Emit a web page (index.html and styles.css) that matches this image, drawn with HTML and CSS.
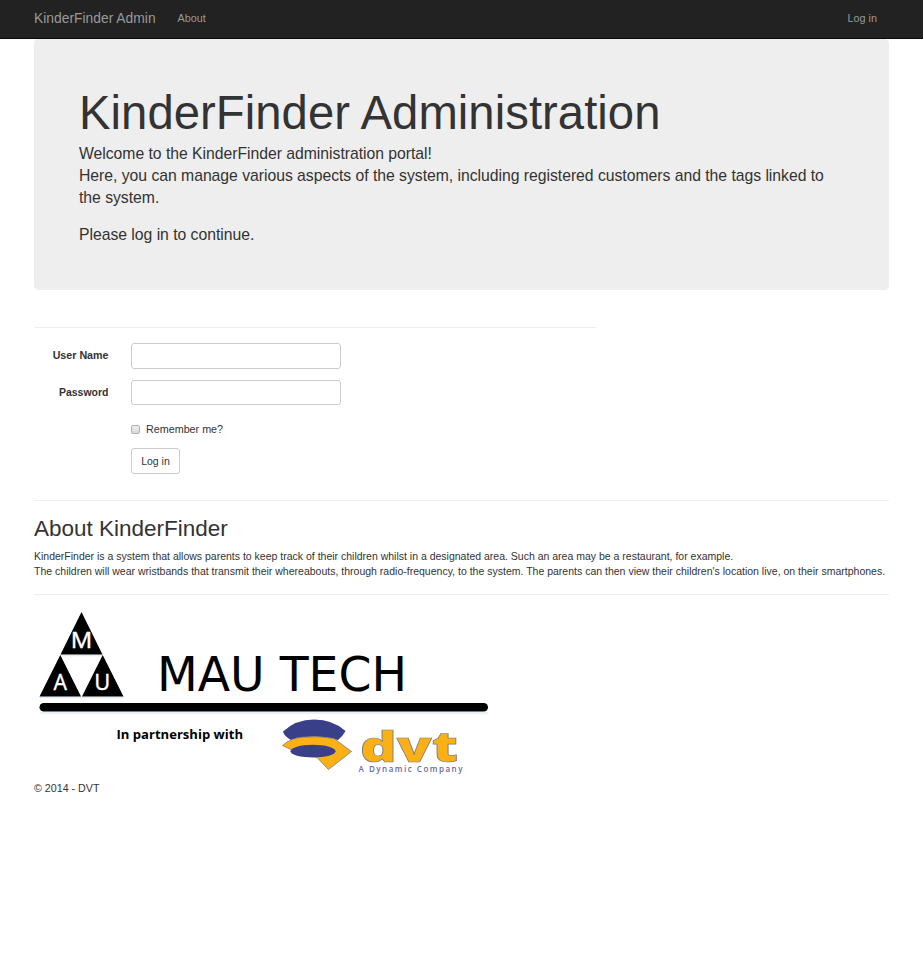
FILE: index.html
```html
<!DOCTYPE html>
<html lang="en">
<head>
<meta charset="utf-8">
<title>KinderFinder Admin</title>
<link rel="stylesheet" href="styles.css">
</head>
<body>
<nav class="navbar">
  <div class="navbar-inner">
    <a class="brand">KinderFinder Admin</a>
    <a class="nav-link about">About</a>
    <a class="nav-link login">Log in</a>
  </div>
</nav>
<main class="container">
  <section class="jumbotron">
    <h1>KinderFinder Administration</h1>
    <p class="lead">Welcome to the KinderFinder administration portal!<br>Here, you can manage various aspects of the system, including registered customers and the tags linked to<br>the system.</p>
    <p class="lead">Please log in to continue.</p>
  </section>
  <form class="login-form">
    <hr>
    <div class="row"><label class="user-label" for="user">User Name</label><input class="field" id="user" type="text"></div>
    <div class="row"><label for="pass">Password</label><input class="field" id="pass" type="password"></div>
    <div class="remember"><input class="check" type="checkbox" id="rem"><label for="rem">Remember me?</label></div>
    <button class="btn" type="button">Log in</button>
  </form>
  <hr>
  <section class="about-text">
    <h2>About KinderFinder</h2>
    <p>KinderFinder is a system that allows parents to keep track of their children whilst in a designated area. Such an area may be a restaurant, for example.<br><span class="long-line">The children will wear wristbands that transmit their whereabouts, through radio-frequency, to the system. The parents can then view their children's location live, on their smartphones.</span></p>
  </section>
  <hr>
  <footer>
    <svg class="logo" width="460" height="175" viewBox="34 606 460 175">
      <path d="M39.500 697.500H124M60 655.500H103M40 713H488" stroke="#e2edf8" stroke-width="1.500"/>
      <path d="M81.500 612L102.500 654.500H60.500ZM60.300 655L81 696.500H39.500ZM102.700 655L123.500 696.500H82Z"/>
      <g class="tri" fill="#fff">
        <text x="70.800" y="647.500" textLength="21.500" lengthAdjust="spacingAndGlyphs">M</text>
        <text x="53.500" y="689.500" textLength="13.500" lengthAdjust="spacingAndGlyphs">A</text>
        <text x="94.200" y="689.500" textLength="16" lengthAdjust="spacingAndGlyphs">U</text>
      </g>
      <text class="mau" x="157" y="691" textLength="250" lengthAdjust="spacingAndGlyphs">MAU TECH</text>
      <rect x="39.500" y="703" width="448.500" height="8.500" rx="4.250"/>
      <text class="partner" x="116.500" y="739" textLength="126.500" lengthAdjust="spacingAndGlyphs">In partnership with</text>
      <path d="M283 731.500Q296 719.500 314 719.500Q333 719.500 345.500 731Q343 736 338 740Q314 733.500 291 740Q284 736 283 731.500Z" fill="#393f88"/>
      <path d="M282.500 745.500Q291 738 302 737.200Q318 735.500 334 738.500L351.500 751.500L328.500 769.500L317 757.500L292 750Z" fill="#fbb116" stroke="#7d7a80" stroke-width=".8"/>
      <ellipse cx="313" cy="751.200" rx="22.500" ry="6.400" fill="#393f88"/>
      <text class="dvt" x="360" y="761.500" textLength="98" lengthAdjust="spacingAndGlyphs">dvt</text>
      <text class="company" x="358.500" y="772.300" textLength="104" lengthAdjust="spacing">A Dynamic Company</text>
    </svg>
    <p class="copyright">© 2014 - DVT</p>
  </footer>
</main>
</body>
</html>
```
FILE: styles.css
```css
* { box-sizing: border-box; }
body {
  margin: 0;
  background: #fff;
  color: #333;
  font: 10.5px/15px "Liberation Sans", Arial, sans-serif;
}
h1, h2, p { margin: 0; font-weight: normal; }
.navbar { height: 39px; background: #222; border-bottom: 1px solid #080808; }
.navbar-inner {
  display: flex;
  align-items: center;
  height: 37px;
  padding: 0 46px 0 34px;
  color: #999;
}
.brand { font-size: 13.85px; }
.about { margin-left: 22px; font-size: 10.8px; }
.login { margin-left: auto; font-size: 10.8px; }
.container { width: 855px; margin: 0 auto; }
.jumbotron {
  height: 251px;
  padding: 50px 45px 0;
  background: #eee;
  border-radius: 4.5px;
}
h1 { font-size: 47.25px; line-height: 47px; margin-bottom: 7px; letter-spacing: .04px; white-space: nowrap; }
.lead { font-size: 15.75px; line-height: 22px; margin-bottom: 15px; letter-spacing: -.027px; white-space: nowrap; }
hr { height: 1px; margin: 0; border: 0; background: #eee; }
.login-form { margin-top: 37px; height: 173px; }
.login-form hr { width: 562px; margin-bottom: 15px; }
.row { display: flex; height: 26px; margin-bottom: 11px; }
.row label { width: 74.5px; margin-right: 22.5px; padding-top: 5px; text-align: right; font-weight: bold; }
.row .user-label { font-size: 10.7px; }
.field { width: 210px; height: 26px; border: 1px solid #ccc; border-radius: 3px; }
#pass { height: 25px; }
.remember { display: flex; align-items: center; height: 15px; margin: 16px 0 11px 97px; font-size: 10.75px; }
.check {
  appearance: none;
  width: 9px;
  height: 9px;
  margin: 0 6px 0 0;
  border: 1px solid #b0b0b0;
  border-radius: 2px;
  background: linear-gradient(#eee, #d8d8d8);
}
.btn {
  display: block;
  width: 49px;
  height: 26px;
  margin-left: 97px;
  padding: 0;
  border: 1px solid #ccc;
  border-radius: 3px;
  background: #fff;
  color: #333;
  font: inherit;
}
h2 { font-size: 22.5px; line-height: 25px; margin: 15px 0 8px; }
.about-text { margin-bottom: 15px; white-space: nowrap; }
.long-line { letter-spacing: .005px; }
.logo { display: block; margin-top: 11px; }
.copyright { font-size: 10.7px; }
.tri { font: 21.5px "Noto Sans", sans-serif; stroke: #fff; stroke-width: .3px; }
.mau { font: 47.5px "DejaVu Sans", sans-serif; }
.partner { font: bold 13px "Open Sans", sans-serif; }
.dvt { font: 800 43px "Open Sans", sans-serif; fill: #fbb116; stroke: #7d7a80; stroke-width: .7px; }
.company { font: 600 8px "Open Sans", sans-serif; fill: #686b9c; }
```
